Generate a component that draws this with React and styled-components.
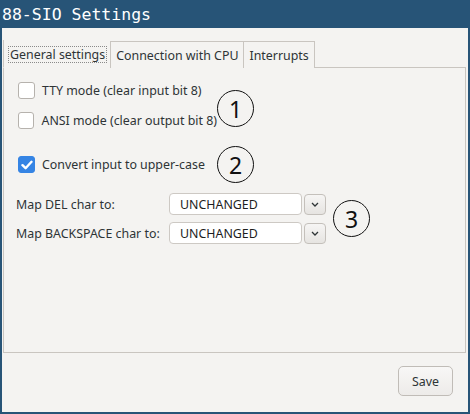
import React from "react";
import styled, { createGlobalStyle } from "styled-components";

const GlobalStyle = createGlobalStyle`
  html, body {
    margin: 0;
    padding: 0;
    background: #275477;
  }
  body {
    font-family: "Noto Sans", "Open Sans", sans-serif;
    font-size: 12.4px;
    color: #2e3436;
  }
`;

const Win = styled.div`
  width: 470px;
  height: 414px;
  box-sizing: border-box;
  background: #275477;
  border: 2px solid #275477;
  border-top: 0;
  display: flex;
  flex-direction: column;
`;

const TitleBar = styled.div`
  height: 28px;
  display: flex;
  align-items: center;
  font-family: "DejaVu Sans Mono", monospace;
  font-size: 16.5px;
  color: #ffffff;
`;

const Body = styled.div`
  flex: 1;
  background: #f4f3f1;
  display: flex;
  flex-direction: column;
  padding: 12px 2px 0 1px;
`;

const TabBar = styled.div`
  display: flex;
  align-items: flex-end;
  height: 28px;
  position: relative;
  z-index: 1;
`;

const Tab = styled.div`
  box-sizing: border-box;
  height: ${(p) => (p.$active ? "28px" : "27px")};
  display: flex;
  align-items: center;
  color: #2e3436;
  background: #f4f3f1;
  border-left: 1px solid #c9c5c0;
  border-bottom: ${(p) => (p.$active ? "1px solid #f4f3f1" : "0")};
  border-top: ${(p) => (p.$active ? "0" : "1px solid #c9c5c0")};
  border-right: ${(p) => (p.$active ? "0" : "1px solid #c9c5c0")};
  padding: ${(p) => (p.$active ? "2px 4px 0 4px" : "0 5px 0 5px")};
  & + & {
    margin-left: -1px;
  }
`;

const Focus = styled.span`
  border: 1px dotted #8a8a8a;
  padding: 0 1px;
  line-height: 15px;
`;

const Panel = styled.div`
  box-sizing: border-box;
  height: 286px;
  border: 1px solid #c9c5c0;
  margin-top: -1px;
  padding: 14px 0 0 14px;
  display: flex;
  flex-direction: column;
`;

const Group = styled.div`
  display: flex;
  align-items: center;
  margin-bottom: ${(p) => p.$gap || "0"};
`;

const Checks = styled.div`
  display: flex;
  flex-direction: column;
  gap: 13px;
  width: 199px;
`;

const CheckRow = styled.label`
  display: flex;
  align-items: center;
  height: 17px;
  gap: 7px;
  white-space: nowrap;
`;

const Box = styled.span`
  box-sizing: border-box;
  width: 17px;
  height: 17px;
  border-radius: 3px;
  border: 1px solid ${(p) => (p.$on ? "#3584e4" : "#b6b2ad")};
  background: ${(p) => (p.$on ? "#3584e4" : "#ffffff")};
  display: flex;
  align-items: center;
  justify-content: center;
`;

const Circle = styled.div`
  box-sizing: border-box;
  width: 37px;
  height: 37px;
  border-radius: 50%;
  border: 1.5px solid #111;
  display: flex;
  align-items: center;
  justify-content: center;
  font-size: 23px;
  color: #111;
  margin-left: ${(p) => p.$ml || "0"};
  margin-top: ${(p) => p.$mt || "0"};
`;

const Maps = styled.div`
  display: grid;
  grid-template-columns: 151px 133px 23px;
  row-gap: 7px;
  column-gap: 2px;
  align-items: center;
  margin-left: -2px;
`;

const Label = styled.div`
  padding-left: 0;
`;

const Combo = styled.div`
  box-sizing: border-box;
  height: 22px;
  background: #fff;
  border: 1px solid #cdc9c4;
  border-radius: 4px;
  display: flex;
  align-items: center;
  padding-left: 10px;
  color: #1d1d1d;
`;

const Arrow = styled.div`
  box-sizing: border-box;
  width: 22px;
  height: 21px;
  border: 1px solid #c4c0bb;
  border-radius: 4px;
  background: linear-gradient(#f6f5f4, #e6e4e1);
  display: flex;
  align-items: center;
  justify-content: center;
`;

const Footer = styled.div`
  flex: 1;
  display: flex;
  justify-content: flex-end;
  align-items: flex-start;
  padding: 13px 13px 0 0;
`;

const Button = styled.button`
  box-sizing: border-box;
  width: 55px;
  height: 30px;
  border: 1px solid #c0bcb7;
  border-radius: 5px;
  background: linear-gradient(#f8f7f6, #edebe9);
  font-family: "Noto Sans", "Open Sans", sans-serif;
  font-size: 12.4px;
  color: #2e3436;
  padding: 0;
`;

const Check = () => (
  <svg width="12" height="10" viewBox="0 0 12 10">
    <path d="M1.5 5.2 L4.6 8.2 L10.5 1.8" fill="none" stroke="#fff" strokeWidth="2.4" strokeLinecap="round" strokeLinejoin="round" />
  </svg>
);

const Chevron = () => (
  <svg width="8" height="5" viewBox="0 0 8 5">
    <path d="M1 1 L4 4 L7 1" fill="none" stroke="#2e3436" strokeWidth="1.3" />
  </svg>
);

const MapRow = ({ label }) => (
  <>
    <Label>{label}</Label>
    <Combo>UNCHANGED</Combo>
    <Arrow>
      <Chevron />
    </Arrow>
  </>
);

export default function App() {
  return (
    <>
      <GlobalStyle />
      <Win>
        <TitleBar>88-SIO Settings</TitleBar>
        <Body>
          <TabBar>
            <Tab $active>
              <Focus>General settings</Focus>
            </Tab>
            <Tab>Connection with CPU</Tab>
            <Tab>Interrupts</Tab>
          </TabBar>
          <Panel>
            <Group $gap="17px">
              <Checks>
                <CheckRow>
                  <Box />
                  TTY mode (clear input bit 8)
                </CheckRow>
                <CheckRow>
                  <Box />
                  ANSI mode (clear output bit 8)
                </CheckRow>
              </Checks>
              <Circle $mt="6px">1</Circle>
            </Group>
            <Group $gap="10px">
              <Checks>
                <CheckRow>
                  <Box $on>
                    <Check />
                  </Box>
                  Convert input to upper-case
                </CheckRow>
              </Checks>
              <Circle>2</Circle>
            </Group>
            <Group>
              <Maps>
                <MapRow label="Map DEL char to:" />
                <MapRow label="Map BACKSPACE char to:" />
              </Maps>
              <Circle $ml="6px">3</Circle>
            </Group>
          </Panel>
          <Footer>
            <Button>Save</Button>
          </Footer>
        </Body>
      </Win>
    </>
  );
}
